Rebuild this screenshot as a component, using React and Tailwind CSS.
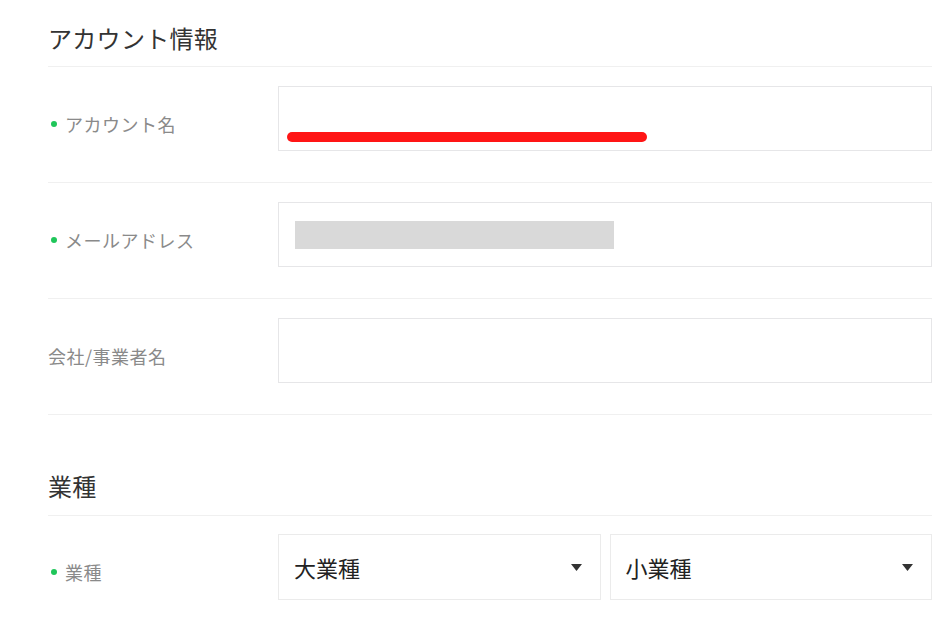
const font = { fontFamily: '"Noto Sans CJK JP", "Noto Sans", sans-serif' };

const SectionTitle = ({ children, className }) => (
  <div className={`border-b border-[#f0f0f0] ${className}`}>
    <h2 className="text-[24px] leading-[28px] tracking-[0.3px] text-[#333]">{children}</h2>
  </div>
);

const Label = ({ required, children }) => (
  <div className="w-[230px] shrink-0 flex items-center mt-[26px] h-[24px]">
    {required ? (
      <span className="w-[6px] h-[6px] rounded-full bg-[#1fc65a] ml-[3px] mr-[8px]" />
    ) : null}
    <span className="text-[18px] leading-[24px] tracking-[0.5px] text-[#8a8a8a]">{children}</span>
  </div>
);

const InputRow = ({ label, required, children }) => (
  <div className="flex items-start border-b border-[#f0f0f0] pt-[19px] pb-[31px]">
    <Label required={required}>{label}</Label>
    <div className="flex-1 h-[65px] border border-[#e6e6e8] bg-white">{children}</div>
  </div>
);

const Select = ({ text }) => (
  <div className="h-[66px] border border-[#ebebeb] flex items-center justify-between pl-[15px] pr-[18px]">
    <span className="text-[22px] text-[#222]">{text}</span>
    <svg width="11" height="7" viewBox="0 0 11 7">
      <path d="M0 0 L11 0 L5.5 7 Z" fill="#333" />
    </svg>
  </div>
);

export default function App() {
  return (
    <div className="min-h-screen bg-white" style={font}>
      <div className="ml-[48px] w-[884px]">
        <SectionTitle className="pt-[24px] pb-[14px]">アカウント情報</SectionTitle>

        <InputRow label="アカウント名" required>
          <div className="ml-[8px] mt-[45px] h-[10px] w-[360px] rounded-full bg-[#ff1515]" />
        </InputRow>

        <InputRow label="メールアドレス" required>
          <div className="ml-[16px] mt-[18px] h-[28px] w-[319px] bg-[#d9d9d9]" />
        </InputRow>

        <InputRow label="会社/事業者名" />

        <SectionTitle className="pt-[57px] pb-[15px]">業種</SectionTitle>

        <div className="flex items-start pt-[18px] pb-[26px]">
          <Label required>業種</Label>
          <div className="flex-1 grid grid-cols-2 gap-[9px]">
            <Select text="大業種" />
            <Select text="小業種" />
          </div>
        </div>
      </div>
    </div>
  );
}
